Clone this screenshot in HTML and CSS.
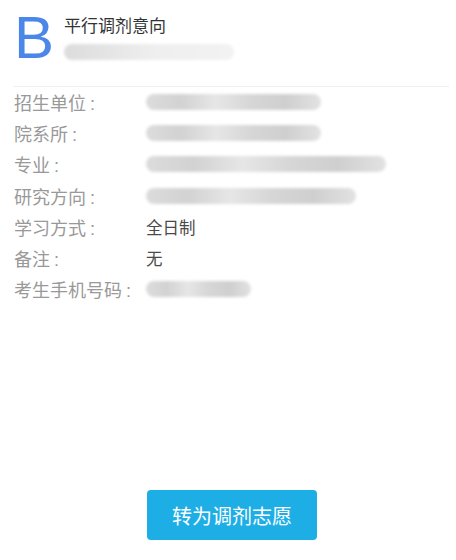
FILE: index.html
```html
<!DOCTYPE html>
<html lang="zh">
<head>
<meta charset="utf-8">
<link rel="stylesheet" href="styles.css">
</head>
<body>
<div class="page">
  <div class="header">
    <div class="badge">B</div>
    <div class="head-text">
      <div class="title">平行调剂意向</div>
      <div class="blur sub" style="width:170px"></div>
    </div>
  </div>
  <div class="rows">
    <div class="row"><span class="label">招生单位<span class="colon">:</span></span><span class="blur val" style="width:175px"></span></div>
    <div class="row"><span class="label">院系所<span class="colon">:</span></span><span class="blur val" style="width:175px"></span></div>
    <div class="row"><span class="label">专业<span class="colon">:</span></span><span class="blur val" style="width:240px"></span></div>
    <div class="row"><span class="label">研究方向<span class="colon">:</span></span><span class="blur val" style="width:210px"></span></div>
    <div class="row"><span class="label">学习方式<span class="colon">:</span></span><span class="value">全日制</span></div>
    <div class="row"><span class="label">备注<span class="colon">:</span></span><span class="value">无</span></div>
    <div class="row"><span class="label">考生手机号码<span class="colon">:</span></span><span class="blur val" style="width:105px"></span></div>
  </div>
  <div class="spacer"></div>
  <div class="actions">
    <button class="btn">转为调剂志愿</button>
  </div>
</div>
</body>
</html>
```
FILE: styles.css
```css
html, body {
  margin: 0;
  padding: 0;
  background: #fff;
}
body {
  font-family: "Liberation Sans", "Noto Sans CJK SC", sans-serif;
  width: 456px;
  height: 560px;
  overflow: hidden;
}
.page {
  display: flex;
  flex-direction: column;
  height: 560px;
  padding: 0 7px 0 14px;
  box-sizing: border-box;
}
.header {
  display: flex;
  align-items: flex-start;
  height: 87px;
  border-bottom: 1px solid #eeeeee;
  box-sizing: border-box;
}
.badge {
  font-family: "Liberation Sans", sans-serif;
  font-size: 60px;
  line-height: 60px;
  color: #4a87e8;
  margin-top: 8px;
  width: 50px;
}
.head-text {
  display: flex;
  flex-direction: column;
  padding-top: 13px;
}
.title {
  font-family: "Noto Sans CJK SC", sans-serif;
  font-size: 17px;
  line-height: 24px;
  color: #333;
}
.blur {
  display: inline-block;
  background: linear-gradient(90deg, #dcdcdc 0%, #d2d2d2 20%, #e6e6e6 40%, #d6d6d6 60%, #cfcfcf 80%, #e2e2e2 100%);
  filter: blur(1.5px);
  border-radius: 9px;
}
.sub {
  height: 16px;
  margin-top: 7px;
  background: linear-gradient(90deg, #dcdcdc 0%, #e4e4e4 25%, #eeeeee 50%, #f2f2f2 100%);
}
.rows {
  display: flex;
  flex-direction: column;
  margin-top: -1px;
}
.row {
  display: flex;
  align-items: center;
  height: 31.3px;
}
.label {
  width: 132px;
  color: #999;
  font-family: "Noto Sans CJK SC", sans-serif;
  font-size: 18px;
}
.colon {
  font-family: "Liberation Sans", sans-serif;
  margin-left: 4px;
}
.value {
  color: #4a4a4a;
  font-family: "Noto Sans CJK SC", sans-serif;
  font-size: 16.5px;
}
.val {
  height: 16px;
}
.spacer {
  flex: 1;
}
.actions {
  display: flex;
  padding-left: 133px;
  padding-bottom: 20px;
}
.btn {
  width: 170px;
  height: 50px;
  border: none;
  border-radius: 4px;
  background: #1eaee6;
  color: #fff;
  font-family: "Noto Sans CJK SC", sans-serif;
  font-size: 20px;
  padding: 0;
}
```
